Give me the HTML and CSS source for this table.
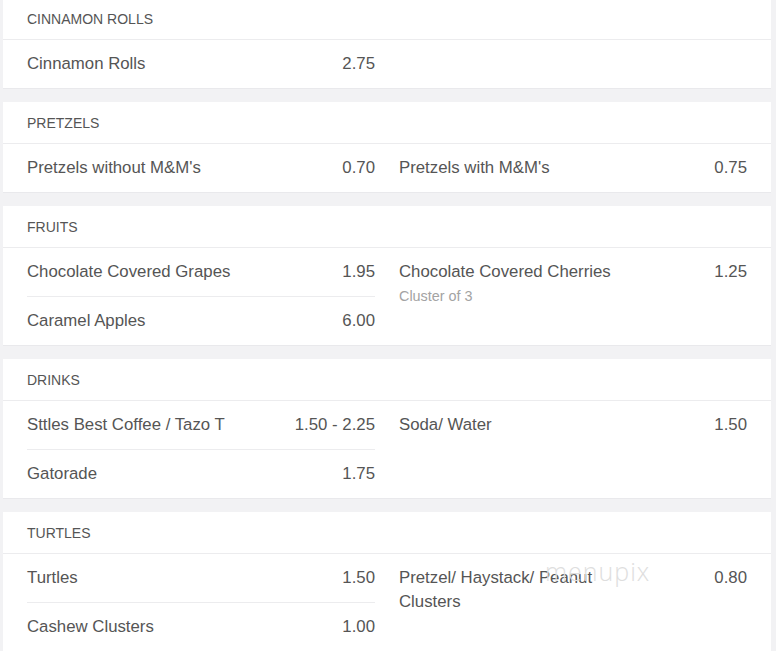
FILE: index.html
```html
<!DOCTYPE html>
<html>
<head>
<meta charset="utf-8">
<link rel="stylesheet" href="styles.css">
</head>
<body>
<div class="page">
  <section class="card first">
    <div class="card-head">CINNAMON ROLLS</div>
    <div class="cols">
      <ul class="col">
        <li class="item"><div class="row"><span class="name">Cinnamon Rolls</span><span class="price">2.75</span></div></li>
      </ul>
      <ul class="col"></ul>
    </div>
  </section>

  <section class="card">
    <div class="card-head">PRETZELS</div>
    <div class="cols">
      <ul class="col">
        <li class="item"><div class="row"><span class="name">Pretzels without M&amp;M's</span><span class="price">0.70</span></div></li>
      </ul>
      <ul class="col">
        <li class="item"><div class="row"><span class="name">Pretzels with M&amp;M's</span><span class="price">0.75</span></div></li>
      </ul>
    </div>
  </section>

  <section class="card">
    <div class="card-head">FRUITS</div>
    <div class="cols">
      <ul class="col">
        <li class="item"><div class="row"><span class="name">Chocolate Covered Grapes</span><span class="price">1.95</span></div></li>
        <li class="item"><div class="row"><span class="name">Caramel Apples</span><span class="price">6.00</span></div></li>
      </ul>
      <ul class="col">
        <li class="item"><div class="row"><span class="name">Chocolate Covered Cherries</span><span class="price">1.25</span></div><div class="note">Cluster of 3</div></li>
      </ul>
    </div>
  </section>

  <section class="card">
    <div class="card-head">DRINKS</div>
    <div class="cols">
      <ul class="col">
        <li class="item"><div class="row"><span class="name">Sttles Best Coffee / Tazo T</span><span class="price">1.50 - 2.25</span></div></li>
        <li class="item"><div class="row"><span class="name">Gatorade</span><span class="price">1.75</span></div></li>
      </ul>
      <ul class="col">
        <li class="item"><div class="row"><span class="name">Soda/ Water</span><span class="price">1.50</span></div></li>
      </ul>
    </div>
  </section>

  <section class="card">
    <div class="card-head">TURTLES</div>
    <div class="cols">
      <ul class="col">
        <li class="item"><div class="row"><span class="name">Turtles</span><span class="price">1.50</span></div></li>
        <li class="item"><div class="row"><span class="name">Cashew Clusters</span><span class="price">1.00</span></div></li>
      </ul>
      <ul class="col">
        <li class="item"><div class="row"><span class="name">Pretzel/ Haystack/ Peanut Clusters</span><span class="price">0.80</span></div></li>
      </ul>
    </div>
    <div class="watermark">menupix</div>
  </section>
</div>
</body>
</html>
```

FILE: styles.css
```css
html, body {
  margin: 0;
  padding: 0;
  background: #f2f2f4;
}
body {
  font-family: "Liberation Sans", Arial, sans-serif;
  color: #555;
  overflow: hidden;
}
.page {
  display: flex;
  flex-direction: column;
  gap: 14px;
  margin: -2px 5px 0 3px;
}
.card {
  position: relative;
  background: #fff;
  box-shadow: 0 1px 0 #e9e9ec;
}
.card-head {
  height: 40px;
  line-height: 40px;
  padding: 1px 24px 0;
  font-size: 14px;
  color: #555;
  border-bottom: 1px solid #ececee;
  box-sizing: content-box;
}
.cols {
  display: grid;
  grid-template-columns: 1fr 1fr;
  column-gap: 24px;
  padding: 0 24px;
}
.col {
  list-style: none;
  margin: 0;
  padding: 0;
}
.item {
  padding: 12px 0;
}
.item + .item {
  border-top: 1px solid #ececee;
}
.row {
  display: flex;
  justify-content: space-between;
  align-items: flex-start;
  font-size: 16.8px;
  line-height: 24px;
}
.name {
  max-width: 66%;
}
.price {
  text-align: right;
  white-space: nowrap;
}
.note {
  margin-top: 2px;
  font-size: 14.4px;
  line-height: 20px;
  color: #a3a3a3;
}
.watermark {
  position: absolute;
  left: 542px;
  top: 42px;
  font-size: 25px;
  font-weight: 300;
  letter-spacing: 1px;
  color: #dedede;
  font-family: "Open Sans", sans-serif;
  pointer-events: none;
}
```
